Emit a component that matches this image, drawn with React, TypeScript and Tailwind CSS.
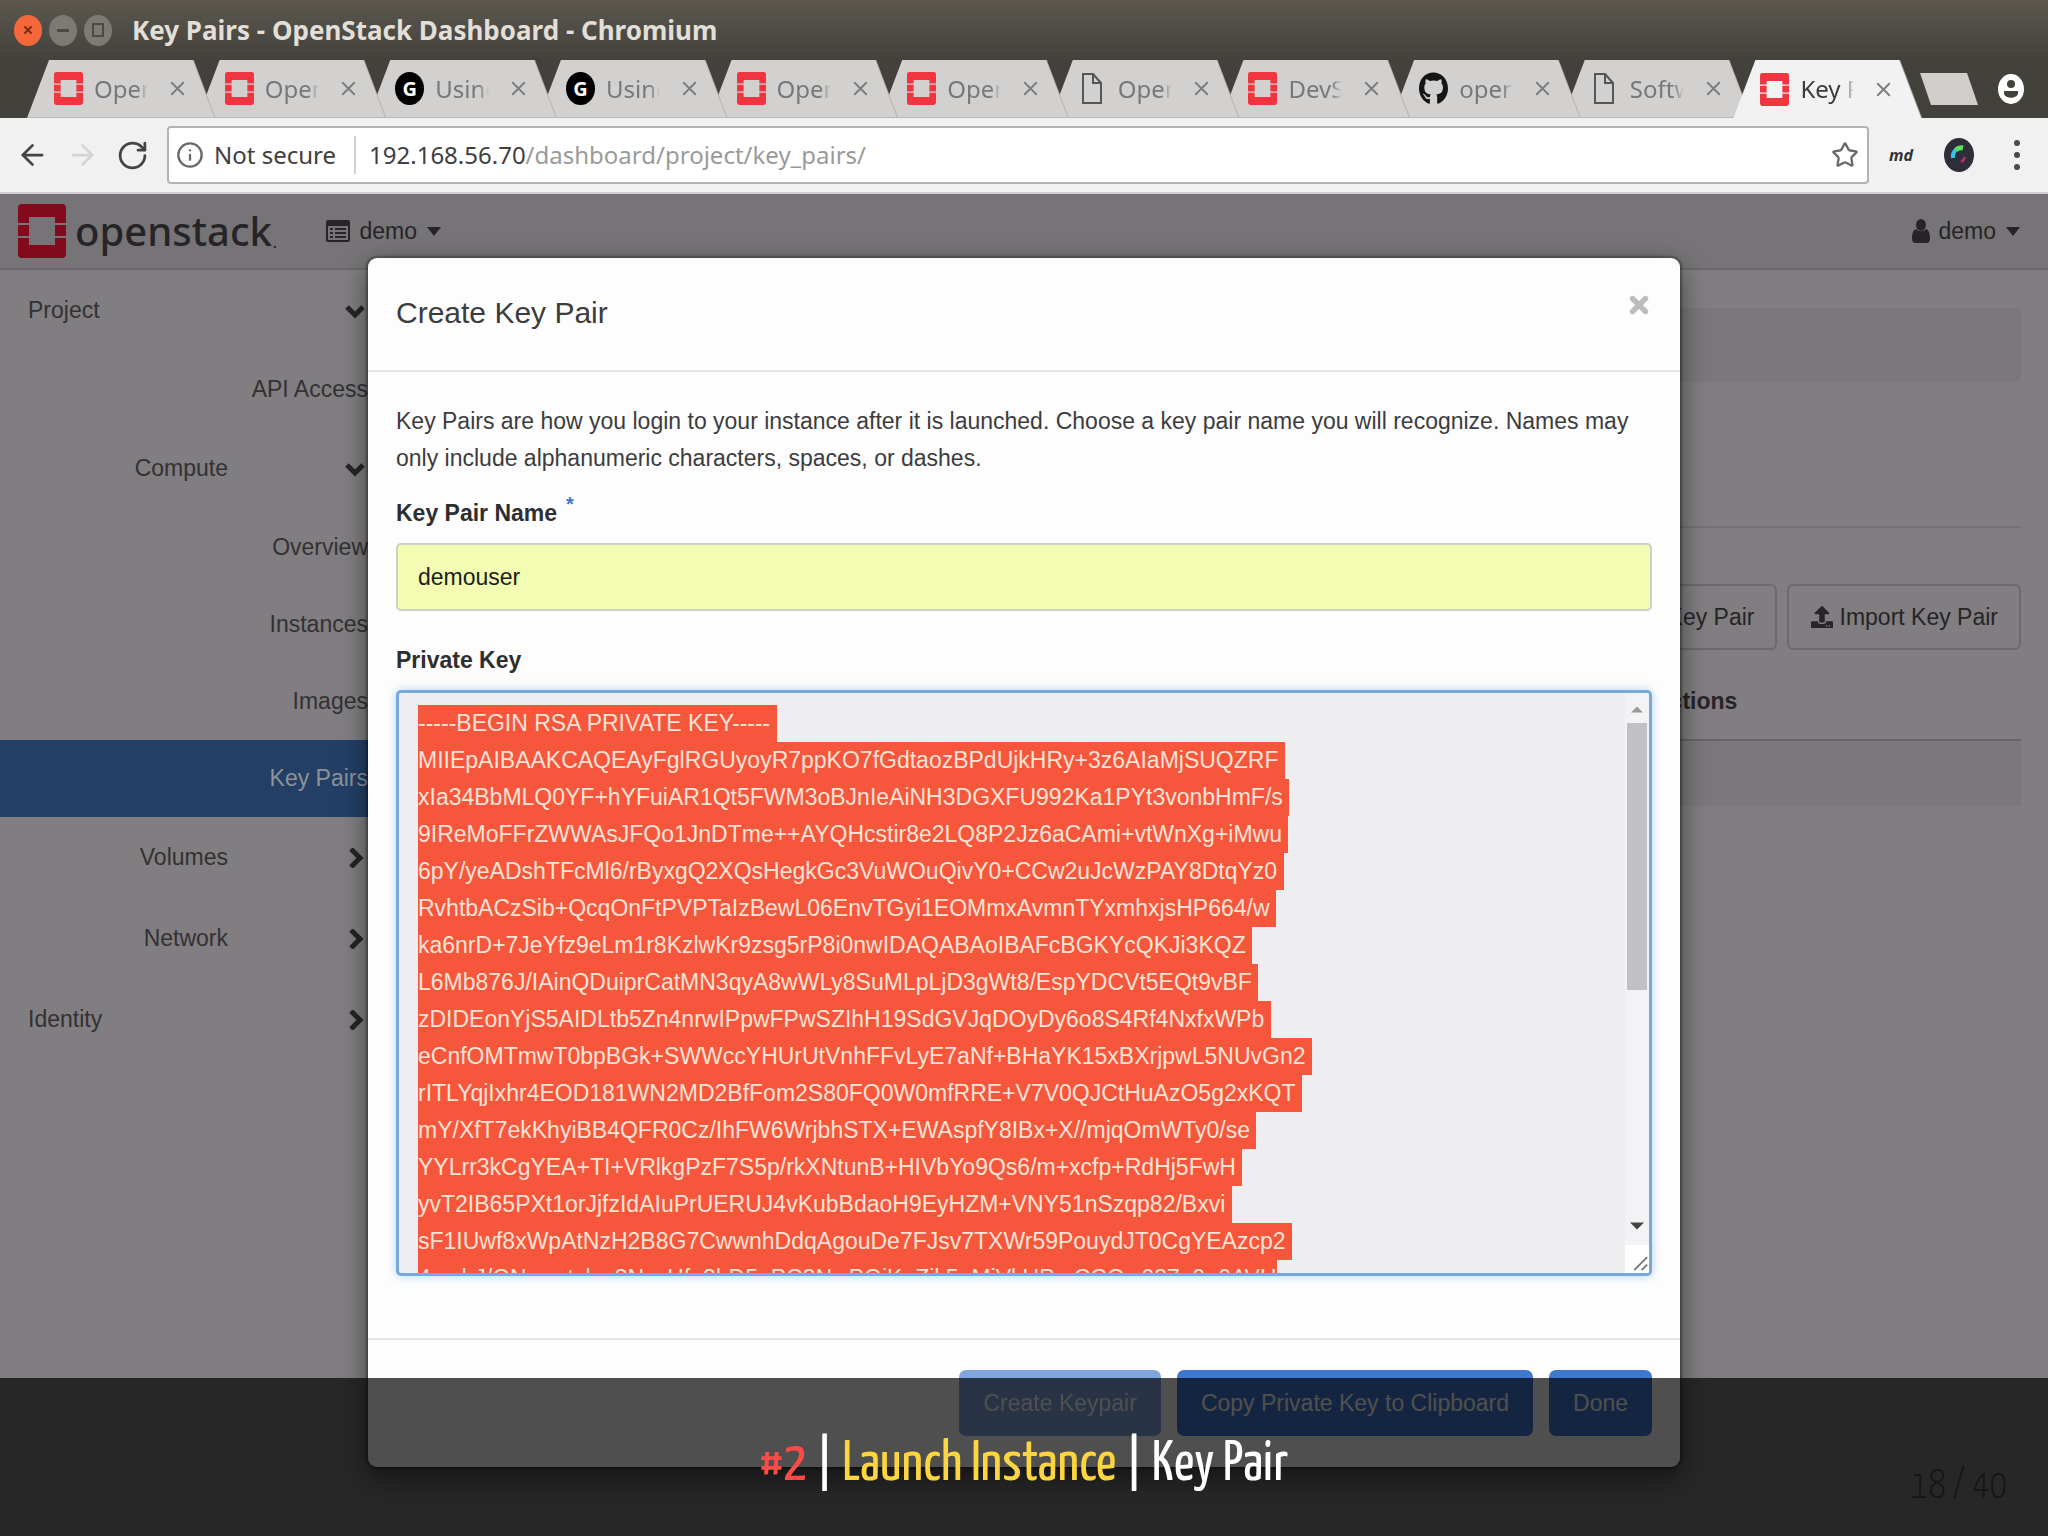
import { useEffect, useRef } from 'react';
import { FaGithub, FaUpload } from 'react-icons/fa';
import { ArrowLeft, ArrowRight, RotateCw, Info, Star, X, File } from 'lucide-react';

const PRIVATE_KEY = `-----BEGIN RSA PRIVATE KEY-----
MIIEpAIBAAKCAQEAyFglRGUyoyR7ppKO7fGdtaozBPdUjkHRy+3z6AIaMjSUQZRF
xIa34BbMLQ0YF+hYFuiAR1Qt5FWM3oBJnIeAiNH3DGXFU992Ka1PYt3vonbHmF/s
9IReMoFFrZWWAsJFQo1JnDTme++AYQHcstir8e2LQ8P2Jz6aCAmi+vtWnXg+iMwu
6pY/yeADshTFcMl6/rByxgQ2XQsHegkGc3VuWOuQivY0+CCw2uJcWzPAY8DtqYz0
RvhtbACzSib+QcqOnFtPVPTaIzBewL06EnvTGyi1EOMmxAvmnTYxmhxjsHP664/w
ka6nrD+7JeYfz9eLm1r8KzlwKr9zsg5rP8i0nwIDAQABAoIBAFcBGKYcQKJi3KQZ
L6Mb876J/IAinQDuiprCatMN3qyA8wWLy8SuMLpLjD3gWt8/EspYDCVt5EQt9vBF
zDIDEonYjS5AIDLtb5Zn4nrwIPpwFPwSZIhH19SdGVJqDOyDy6o8S4Rf4NxfxWPb
eCnfOMTmwT0bpBGk+SWWccYHUrUtVnhFFvLyE7aNf+BHaYK15xBXrjpwL5NUvGn2
rITLYqjIxhr4EOD181WN2MD2BfFom2S80FQ0W0mfRRE+V7V0QJCtHuAzO5g2xKQT
mY/XfT7ekKhyiBB4QFR0Cz/IhFW6WrjbhSTX+EWAspfY8IBx+X//mjqOmWTy0/se
YYLrr3kCgYEA+TI+VRlkgPzF7S5p/rkXNtunB+HIVbYo9Qs6/m+xcfp+RdHj5FwH
yvT2IB65PXt1orJjfzIdAIuPrUERUJ4vKubBdaoH9EyHZM+VNY51nSzqp82/Bxvi
sF1IUwf8xWpAtNzH2B8G7CwwnhDdqAgouDe7FJsv7TXWr59PouydJT0CgYEAzcp2
4xmbJ/GNwnstvlwr3NzyHfe3hD5nPC3NwPGiKaZik5eMiVkUPmCCOw037n9o0AVH`;

const tabs = [
  { icon: 'stack', title: 'Open' },
  { icon: 'stack', title: 'Open' },
  { icon: 'g', title: 'Using' },
  { icon: 'g', title: 'Using' },
  { icon: 'stack', title: 'Open' },
  { icon: 'stack', title: 'Open' },
  { icon: 'file', title: 'Open' },
  { icon: 'stack', title: 'DevS' },
  { icon: 'github', title: 'open' },
  { icon: 'file', title: 'Softw' },
  { icon: 'stack', title: 'Key P', active: true },
];

const StackLogo = ({ className }: { className: string }) => (
  <svg viewBox="0 0 48 54" preserveAspectRatio="none" className={className} fill="currentColor" aria-hidden="true">
    <path d="M4 0h40a4 4 0 0 1 4 4v15H37v-6H11v6H0V4a4 4 0 0 1 4-4z" />
    <path d="M0 21h11v11H0zM37 21h11v11H37z" />
    <path d="M0 34h11v7h26v-7h11v16a4 4 0 0 1-4 4H4a4 4 0 0 1-4-4z" />
  </svg>
);

const Caret = () => (
  <svg viewBox="0 0 14 9" className="ml-[10px] w-[14px] h-[9px]" fill="currentColor" aria-hidden="true">
    <path d="M0 0h14L7 9z" />
  </svg>
);

const ListIcon = () => (
  <svg viewBox="0 0 24 22" className="w-[24px] h-[22px]" aria-hidden="true">
    <path d="M2 0h20a2 2 0 0 1 2 2v18a2 2 0 0 1-2 2H2a2 2 0 0 1-2-2V2a2 2 0 0 1 2-2zM2 6v14h20V6z" fill="currentColor" fillRule="evenodd" />
    <path d="M4 9h3M9 9h11M4 13h3M9 13h11M4 17h3M9 17h11" stroke="currentColor" strokeWidth="2" />
  </svg>
);

const UserIcon = () => (
  <svg viewBox="0 0 18 24" className="w-[18px] h-[24px]" fill="currentColor" aria-hidden="true">
    <ellipse cx="9" cy="6" rx="5" ry="6" />
    <path d="M4 10c-3 1-4 5-4 9 0 3 1 5 4 5h10c3 0 4-2 4-5 0-4-1-8-4-9-2 3-8 3-10 0z" />
  </svg>
);

const TabIcon = ({ name }: { name: string }) => {
  if (name === 'stack') return <StackLogo className="w-[29px] h-[33px] text-[#f03540]" />;
  if (name === 'github') return <FaGithub className="w-[29px] h-[33px] text-[#151515]" preserveAspectRatio="none" />;
  if (name === 'file') {
    return (
      <svg viewBox="0 0 29 33" className="w-[29px] h-[33px]" fill="none" stroke="#555" strokeWidth="2" aria-hidden="true">
        <path d="M5 2h10l8 9v20H5zM15 2v9h8" />
      </svg>
    );
  }
  return (
    <span className="w-[29px] h-[33px] rounded-[50%] bg-black text-white font-bold text-[20px] flex items-center justify-center">G</span>
  );
};

const TitleBar = () => (
  <header className="h-[60px] flex items-center gap-[7px] pl-[14px] bg-linear-to-b from-[#5c584f] to-[#42413c]">
    <button aria-label="Close window" className="w-[28px] h-[31px] rounded-[50%] bg-[#f4683a] text-[#7a2d14] flex items-center justify-center">
      <X className="w-3 h-3" strokeWidth={4} />
    </button>
    <button aria-label="Minimize window" className="w-[28px] h-[31px] rounded-[50%] bg-[#7b7a73] flex items-center justify-center">
      <span className="w-3 h-[3px] bg-[#4b4a45]" />
    </button>
    <button aria-label="Maximize window" className="w-[28px] h-[31px] rounded-[50%] bg-[#7b7a73] flex items-center justify-center">
      <span className="w-3 h-[14px] border-2 border-[#4b4a45]" />
    </button>
    <h1 className="ml-[13px] text-[26px] font-bold text-[#e2dfd8] whitespace-nowrap">Key Pairs - OpenStack Dashboard - Chromium</h1>
  </header>
);

const TabStrip = () => (
  <div className="h-[58px] flex bg-[#42413c] pl-[27px]">
    <ul className="flex-1 flex pr-[4px]">
      {tabs.map((tab, i) => (
        <li
          key={i}
          className="flex-1 min-w-0 -mr-[17px] relative [filter:drop-shadow(1px_0_0_#b4b2b0)]"
          style={{ zIndex: tab.active ? 20 : 11 - i }}
        >
          <div className={`h-full flex items-center pl-[27px] [clip-path:polygon(22px_0,calc(100%-22px)_0,100%_100%,0_100%)] ${tab.active ? 'bg-[#f3f2f2]' : 'bg-[#d2d1d0] border-b border-[#b9b8b8]'}`}>
            <TabIcon name={tab.icon} />
            <a
              href="#"
              className={`ml-[11px] w-[54px] text-[24px] overflow-hidden whitespace-nowrap [mask-image:linear-gradient(to_right,black_80%,transparent)] ${tab.active ? 'text-[#3c3c3c]' : 'text-[#787878]'}`}
            >
              {tab.title}
            </a>
            <button aria-label="Close tab" className="ml-[18px] text-[#7d7d7d]">
              <X className="w-[23px] h-[23px]" strokeWidth={2} />
            </button>
          </div>
        </li>
      ))}
    </ul>
    <div className="w-[140px] flex items-center justify-end gap-[20px] pr-[24px]">
      <button aria-label="New tab" className="w-[58px] h-[32px] bg-[#cfcecd] [clip-path:polygon(0_0,47px_0,100%_100%,11px_100%)]" />
      <button aria-label="Profile">
        <svg viewBox="0 0 26 30" className="w-[26px] h-[30px]" aria-hidden="true">
          <ellipse cx="13" cy="15" rx="13" ry="15" fill="#fff" />
          <circle cx="13" cy="10" r="4" fill="#42413c" />
          <path d="M6 17h14v3c-2 5-12 5-14 0z" fill="#42413c" />
        </svg>
      </button>
    </div>
  </div>
);

const Toolbar = () => (
  <div className="h-[76px] flex items-center bg-[#f2f1f2] border-b-2 border-[#cfcdcf] pl-[16px] pr-[25px] text-[24px]">
    <button aria-label="Back" className="w-[33px]"><ArrowLeft className="w-[33px] h-[36px] text-[#444]" strokeWidth={2} /></button>
    <button aria-label="Forward" className="ml-[17px] w-[33px]"><ArrowRight className="w-[33px] h-[36px] text-[#d4d4d4]" strokeWidth={2} /></button>
    <button aria-label="Reload" className="ml-[17px] w-[33px]"><RotateCw className="w-[33px] h-[33px] text-[#444]" strokeWidth={2} /></button>
    <div className="ml-[18px] flex-1 h-[58px] flex items-center bg-white border-2 border-[#b3b3b5] rounded-[4px] pl-[7px] pr-[8px]">
      <Info className="w-[28px] h-[28px] text-[#6a6a6a]" strokeWidth={2} />
      <span className="ml-[10px] text-[#404040] whitespace-nowrap">Not secure</span>
      <span className="ml-[18px] w-[2px] h-[38px] bg-[#d0d0d0]" />
      <p className="ml-[13px] flex-1 text-[#9a9a9a] whitespace-nowrap"><span className="text-[#404040]">192.168.56.70</span>/dashboard/project/key_pairs/</p>
      <button aria-label="Bookmark"><Star className="w-[28px] h-[28px] text-[#6a6a6a]" strokeWidth={2} /></button>
    </div>
    <button className="ml-[20px] text-[16px] font-bold italic text-[#333]">md</button>
    <button aria-label="Color picker" className="ml-[31px]">
      <svg viewBox="0 0 30 34" className="w-[30px] h-[34px]" aria-hidden="true">
        <ellipse cx="15" cy="17" rx="15" ry="17" fill="#2e2d3a" />
        <path d="M9 20a8 9 0 0 1 4-9" stroke="#35c6e8" strokeWidth="4" fill="none" />
        <path d="M12 12a8 8 0 0 1 7-2" stroke="#5fe05a" strokeWidth="5" fill="none" />
        <path d="M21 19a8 8 0 0 1-4 5" stroke="#a9305f" strokeWidth="3" fill="none" />
      </svg>
    </button>
    <button aria-label="Menu" className="ml-[37px] w-[12px] flex flex-col items-center gap-[6px]">
      <span className="w-[6px] h-[6px] rounded-full bg-[#4a4a4a]" />
      <span className="w-[6px] h-[6px] rounded-full bg-[#4a4a4a]" />
      <span className="w-[6px] h-[6px] rounded-full bg-[#4a4a4a]" />
    </button>
  </div>
);

const TopNav = () => (
  <nav className="h-[76px] flex items-center justify-between bg-[#767476] border-b-2 border-[#6a686a] pl-[18px] pr-[28px] text-[#262426]">
    <div className="flex items-center">
      <StackLogo className="w-[48px] h-[54px] text-[#83091c]" />
      <span className="ml-[9px] text-[40px] font-medium leading-[54px] font-['Noto_Sans',sans-serif]">openstack</span>
      <span className="text-[20px] leading-[20px] mt-[20px]">.</span>
      <button className="ml-[49px] flex items-center">
        <ListIcon />
        <span className="ml-[9px]">demo</span>
        <Caret />
      </button>
    </div>
    <button className="flex items-center">
      <UserIcon />
      <span className="ml-[8px]">demo</span>
      <Caret />
    </button>
  </nav>
);

interface NavGroupProps {
  label: string;
  open?: boolean;
  root?: boolean;
}

const NavGroup = ({ label, open, root }: NavGroupProps) => (
  <li className="h-[81px] flex items-center justify-between pr-[3px]">
    <a href="#" className={root ? 'pl-[28px]' : 'w-[228px] text-right'}>{label}</a>
    <svg viewBox="0 0 20 20" className="w-[20px] h-[20px]" fill="none" stroke="#262426" strokeWidth="5" aria-hidden="true">
      <path d={open ? 'M2 6l8 8 8-8' : 'M6 1l9 9-9 9'} />
    </svg>
  </li>
);

const NavItem = ({ label, active }: { label: string; active?: boolean }) => (
  <li className={`h-[77px] flex items-center justify-end ${active ? 'bg-[#233f66] text-[#8d929b]' : ''}`}>
    <a href="#">{label}</a>
  </li>
);

const SideNav = () => (
  <aside className="w-[368px] shrink-0 text-[#333133]">
    <ul>
      <NavGroup label="Project" open root />
      <NavItem label="API Access" />
      <NavGroup label="Compute" open />
      <NavItem label="Overview" />
      <NavItem label="Instances" />
      <NavItem label="Images" />
      <NavItem label="Key Pairs" active />
      <NavGroup label="Volumes" />
      <NavGroup label="Network" />
      <NavGroup label="Identity" root />
    </ul>
  </aside>
);

const PageContent = () => (
  <main className="flex-1 min-w-0 pl-[28px] pr-[27px] pt-[38px] text-[#262426]">
    <div className="h-[74px] rounded-[4px] bg-[#7a787a]" />
    <div className="mt-[144px] border-b-2 border-[#747274]" />
    <div className="mt-[56px] flex justify-end gap-[10px]">
      <button className="h-[66px] px-[20px] border-2 border-[#6c6a6c] rounded-[6px]">Create Key Pair</button>
      <button className="h-[66px] px-[21px] border-2 border-[#6c6a6c] rounded-[6px] flex items-center gap-[6px]">
        <FaUpload className="w-[24px] h-[22px]" />
        Import Key Pair
      </button>
    </div>
    <table className="mt-[14px] w-full">
      <thead>
        <tr className="h-[76px] border-b-2 border-[#676567]">
          <th className="text-left">Key Pair Name</th>
          <th className="w-[368px] text-left">Actions</th>
        </tr>
      </thead>
      <tbody>
        <tr className="h-[66px] bg-[#7a787a]"><td colSpan={2} /></tr>
      </tbody>
    </table>
  </main>
);

const KeyPairModal = () => {
  const keyRef = useRef<HTMLTextAreaElement>(null);

  useEffect(() => {
    const el = keyRef.current;
    if (!el) return;
    el.focus({ preventScroll: true });
    el.select();
    el.scrollTop = 0;
  }, []);

  return (
    <div role="dialog" aria-label="Create Key Pair" className="absolute top-[258px] left-[368px] right-[368px] bg-[#fdfdfd] rounded-[9px] shadow-[0_10px_28px_rgba(0,0,0,0.5),0_0_2px_2px_rgba(0,0,0,0.3)] text-[#3c3c3e]">
      <div className="h-[114px] flex justify-between px-[28px] pt-[32px] border-b-2 border-[#e6e6e8]">
        <h2 className="text-[30px] leading-[46px]">Create Key Pair</h2>
        <button aria-label="Close" className="h-[30px] text-[#bcbcbe]">
          <X className="w-[26px] h-[30px]" strokeWidth={5} />
        </button>
      </div>
      <form className="px-[28px] pt-[31px] pb-[62px]">
        <p className="leading-[37px]">
          Key Pairs are how you login to your instance after it is launched. Choose a key pair name you will recognize. Names may only include alphanumeric characters, spaces, or dashes.
        </p>
        <label htmlFor="name" className="block mt-[18px] font-bold leading-[37px] text-[#2e2e30]">
          Key Pair Name<sup className="ml-[9px] text-[20px] leading-none text-[#3b76cf]">*</sup>
        </label>
        <input
          id="name"
          defaultValue="demouser"
          className="mt-[11px] block w-full h-[68px] px-[20px] bg-[#f3fcb3] border-2 border-[#cfd0c4] rounded-[5px] text-[#1c1c1c]"
        />
        <label htmlFor="key" className="block mt-[31px] font-bold leading-[37px] text-[#2e2e30]">Private Key</label>
        <div className="mt-[11px] h-[586px] flex border-[3px] border-[#78a9dc] rounded-[5px] bg-[#eeedef] shadow-[0_0_10px_rgba(102,175,233,0.5)] overflow-hidden">
          <textarea
            id="key"
            ref={keyRef}
            readOnly
            defaultValue={PRIVATE_KEY}
            className="flex-1 resize-none overflow-hidden pl-[19px] pt-[12px] leading-[37px] whitespace-pre outline-none selection:bg-[#f6563c] selection:text-[#fde3d6]"
          />
          <div className="w-[24px] flex flex-col items-center bg-[#f3f2f4]">
            <svg viewBox="0 0 12 6" className="mt-[13px] w-[12px] h-[7px]" fill="#9a9a9a" aria-hidden="true"><path d="M6 0l6 6H0z" /></svg>
            <div className="mt-[10px] w-[20px] h-[267px] bg-[#c1c0c2]" />
            <svg viewBox="0 0 12 6" className="mt-auto mb-[15px] w-[14px] h-[8px]" fill="#444" aria-hidden="true"><path d="M0 0h12L6 6z" /></svg>
            <svg viewBox="0 0 26 28" className="w-[24px] h-[28px] bg-white" stroke="#777" strokeWidth="2" aria-hidden="true"><path d="M10 26L24 12M18 26l6-6" /></svg>
          </div>
        </div>
      </form>
      <div className="flex justify-end gap-[16px] px-[28px] pt-[30px] pb-[31px] border-t-2 border-[#e6e6e8] text-white">
        <button disabled className="h-[66px] px-[24px] rounded-[7px] bg-[#3f78cd] opacity-65">Create Keypair</button>
        <button className="h-[66px] px-[24px] rounded-[7px] bg-[#3f78cd]">Copy Private Key to Clipboard</button>
        <button className="h-[66px] px-[24px] rounded-[7px] bg-[#3f78cd]">Done</button>
      </div>
    </div>
  );
};

const Caption = () => (
  <footer className="absolute inset-x-0 bottom-0 h-[158px] flex justify-center bg-black/69 pt-[52px] font-['Yanone_Kaffeesatz','Open_Sans_Condensed',Lato,sans-serif]">
    <p className="text-[56px] leading-[70px] text-white whitespace-nowrap">
      <span className="text-[#fb4b45]">#2</span> | <span className="text-[#fcd53f]">Launch Instance</span> | Key Pair
    </p>
    <span className="absolute right-[41px] bottom-[26px] text-[40px] leading-[44px] font-light text-[#161516]">18 / 40</span>
  </footer>
);

const App = () => (
  <div className="relative min-h-screen flex flex-col overflow-hidden bg-[#807e80] font-['Noto_Sans',sans-serif]">
    <TitleBar />
    <TabStrip />
    <Toolbar />
    <div className="flex-1 flex flex-col text-[23px] font-['Liberation_Sans',Arial,sans-serif]">
      <TopNav />
      <div className="flex-1 flex">
        <SideNav />
        <PageContent />
      </div>
      <KeyPairModal />
    </div>
    <Caption />
  </div>
);

export default App;
